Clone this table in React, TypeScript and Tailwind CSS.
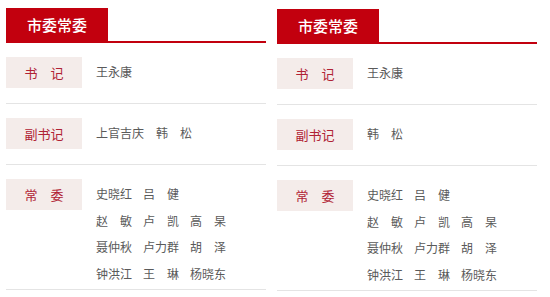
const font = "font-['Microsoft_YaHei','Noto_Sans_CJK_SC',sans-serif]";

type Group = { label: string; names: string[][] };

const left: Group[] = [
  { label: "书　记", names: [["王永康"]] },
  { label: "副书记", names: [["上官吉庆", "韩　松"]] },
  {
    label: "常　委",
    names: [
      ["史晓红", "吕　健"],
      ["赵　敏", "卢　凯", "高　杲"],
      ["聂仲秋", "卢力群", "胡　泽"],
      ["钟洪江", "王　琳", "杨晓东"],
    ],
  },
];

const right: Group[] = [
  { label: "书　记", names: [["王永康"]] },
  { label: "副书记", names: [["韩　松"]] },
  left[2],
];

function Row({ group, grid }: { group: Group; grid: boolean }) {
  return (
    <div className="flex items-start border-b border-[#e4e4e4] pt-[14px] pb-[7px]">
      <div className="w-[76px] h-[31px] mb-[8px] shrink-0 bg-[#f4ecea] flex items-center justify-center text-[13px] text-[#b02234]">
        {group.label}
      </div>
      <div className="ml-[14px] pt-[7px] flex flex-col gap-[10.5px]">
        {group.names.map((row, i) => (
          <div
            key={i}
            className={
              grid
                ? "grid grid-cols-[47px_47px_47px] text-[12px] leading-[16px] text-[#5a5a5a]"
                : "flex gap-[12px] text-[12px] leading-[16px] text-[#5a5a5a]"
            }
          >
            {row.map((n) => (
              <span key={n}>{n}</span>
            ))}
          </div>
        ))}
      </div>
    </div>
  );
}

function Panel({ groups, className }: { groups: Group[]; className?: string }) {
  return (
    <div className={"w-[260px] " + (className ?? "")}>
      <div className="flex items-end">
        <div className="w-[102px] h-[35px] bg-[#c2000e] flex items-center justify-center text-white text-[15px] font-medium">
          市委常委
        </div>
        <div className="flex-1 h-[2px] bg-[#c2000e]" />
      </div>
      <div>
        {groups.map((g, i) => (
          <Row key={i} group={g} grid={i === 2} />
        ))}
      </div>
    </div>
  );
}

export default function App() {
  return (
    <div className={"w-[550px] h-[297px] bg-white flex gap-[11px] pl-[6px] pt-[8px] " + font}>
      <Panel groups={left} />
      <Panel groups={right} className="mt-[1px]" />
    </div>
  );
}
